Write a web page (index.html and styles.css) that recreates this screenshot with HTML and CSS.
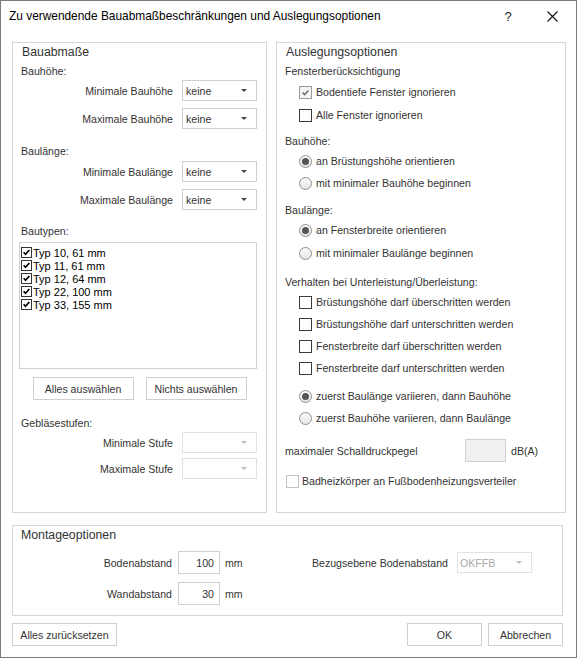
FILE: index.html
```html
<!DOCTYPE html>
<html lang="de">
<head>
    <meta charset="UTF-8">
    <meta name="viewport" content="width=device-width, initial-scale=1.0">
    <title>Bauabmaße und Auslegungsoptionen</title>
    <link rel="stylesheet" href="styles.css">
</head>
<body>
<div class="dialog">
    <div class="titlebar">
        <span class="title">Zu verwendende Bauabmaßbeschränkungen und Auslegungsoptionen</span>
        <span class="help">?</span>
        <span class="close">
            <svg width="11" height="11" viewBox="0 0 11 11"><path d="M0.5 0.5L10.5 10.5M10.5 0.5L0.5 10.5" stroke="#111" stroke-width="1.1"/></svg>
        </span>
    </div>

    <div class="content">
        <div class="columns">
            <!-- Bauabmaße -->
            <section class="group dims">
                <div class="gtitle">Bauabmaße</div>
                <div class="sub">Bauhöhe:</div>
                <div class="field">
                    <span>Minimale Bauhöhe</span>
                    <div class="select"><span>keine</span><i class="arrow"></i></div>
                </div>
                <div class="field next">
                    <span>Maximale Bauhöhe</span>
                    <div class="select"><span>keine</span><i class="arrow"></i></div>
                </div>

                <div class="sub sub-baulaenge">Baulänge:</div>
                <div class="field">
                    <span>Minimale Baulänge</span>
                    <div class="select"><span>keine</span><i class="arrow"></i></div>
                </div>
                <div class="field next">
                    <span>Maximale Baulänge</span>
                    <div class="select"><span>keine</span><i class="arrow"></i></div>
                </div>

                <div class="sub sub-bautypen">Bautypen:</div>
                <div class="typelist">
                    <div class="type"><span class="tick"><svg viewBox="0 0 11 11"><path d="M2 5.2L4.3 7.8L9 2.4"/></svg></span>Typ 10, 61 mm</div>
                    <div class="type"><span class="tick"><svg viewBox="0 0 11 11"><path d="M2 5.2L4.3 7.8L9 2.4"/></svg></span>Typ 11, 61 mm</div>
                    <div class="type"><span class="tick"><svg viewBox="0 0 11 11"><path d="M2 5.2L4.3 7.8L9 2.4"/></svg></span>Typ 12, 64 mm</div>
                    <div class="type"><span class="tick"><svg viewBox="0 0 11 11"><path d="M2 5.2L4.3 7.8L9 2.4"/></svg></span>Typ 22, 100 mm</div>
                    <div class="type"><span class="tick"><svg viewBox="0 0 11 11"><path d="M2 5.2L4.3 7.8L9 2.4"/></svg></span>Typ 33, 155 mm</div>
                </div>
                <div class="listbuttons">
                    <button class="btn">Alles auswählen</button>
                    <button class="btn">Nichts auswählen</button>
                </div>

                <div class="sub sub-fans">Gebläsestufen:</div>
                <div class="field">
                    <span>Minimale Stufe</span>
                    <div class="select disabled"><span></span><i class="arrow"></i></div>
                </div>
                <div class="field next-small">
                    <span>Maximale Stufe</span>
                    <div class="select disabled"><span></span><i class="arrow"></i></div>
                </div>
            </section>

            <!-- Auslegungsoptionen -->
            <section class="group opts">
                <div class="gtitle">Auslegungsoptionen</div>
                <div class="sub">Fensterberücksichtigung</div>
                <label class="option spaced">
                    <span class="box muted"><svg viewBox="0 0 13 13"><path d="M3 6.6L5.4 9L10 4.2"/></svg></span>
                    Bodentiefe Fenster ignorieren
                </label>
                <label class="option spaced"><span class="box"></span>Alle Fenster ignorieren</label>

                <div class="sub sub-gap">Bauhöhe:</div>
                <label class="option"><span class="radio on"></span>an Brüstungshöhe orientieren</label>
                <label class="option"><span class="radio"></span>mit minimaler Bauhöhe beginnen</label>

                <div class="sub sub-gap2">Baulänge:</div>
                <label class="option"><span class="radio on"></span>an Fensterbreite orientieren</label>
                <label class="option spaced"><span class="radio"></span>mit minimaler Baulänge beginnen</label>

                <div class="sub sub-gap3">Verhalten bei Unterleistung/Überleistung:</div>
                <label class="option"><span class="box"></span>Brüstungshöhe darf überschritten werden</label>
                <label class="option"><span class="box"></span>Brüstungshöhe darf unterschritten werden</label>
                <label class="option"><span class="box"></span>Fensterbreite darf überschritten werden</label>
                <label class="option"><span class="box"></span>Fensterbreite darf unterschritten werden</label>

                <label class="option opt-gap"><span class="radio on"></span>zuerst Baulänge variieren, dann Bauhöhe</label>
                <label class="option"><span class="radio"></span>zuerst Bauhöhe variieren, dann Baulänge</label>

                <div class="sound">
                    <span class="sound-label">maximaler Schalldruckpegel</span>
                    <span class="input readonly"></span>
                    <span class="unit">dB(A)</span>
                </div>

                <label class="option bath"><span class="box light"></span>Badheizkörper an Fußbodenheizungsverteiler</label>
            </section>
        </div>

        <!-- Montageoptionen -->
        <section class="group mount">
            <div class="gtitle">Montageoptionen</div>
            <div class="mount-body">
                <div class="mount-left">
                    <div class="mrow">
                        <span class="mlabel">Bodenabstand</span>
                        <span class="input">100</span>
                        <span class="unit">mm</span>
                    </div>
                    <div class="mrow second">
                        <span class="mlabel">Wandabstand</span>
                        <span class="input">30</span>
                        <span class="unit">mm</span>
                    </div>
                </div>
                <div class="mount-right">
                    <span>Bezugsebene Bodenabstand</span>
                    <div class="select disabled"><span>OKFFB</span><i class="arrow"></i></div>
                </div>
            </div>
        </section>

        <div class="footer">
            <button class="btn reset">Alles zurücksetzen</button>
            <button class="btn ok">OK</button>
            <button class="btn cancel">Abbrechen</button>
        </div>
    </div>
</div>
</body>
</html>
```

FILE: styles.css
```css
* {
    box-sizing: border-box;
}
body {
    margin: 0;
    font-family: "Liberation Sans", Arial, sans-serif;
    font-size: 10.6px;
    color: #333;
    background: #fff;
}
.dialog {
    width: 577px;
    height: 658px;
    border: 1px solid #7a7a7a;
    background: #fff;
    display: flex;
    flex-direction: column;
}

/* title bar */
.titlebar {
    height: 30px;
    display: flex;
    align-items: center;
    padding-left: 8px;
    color: #000;
    font-size: 11.9px;
}
.title {
    flex: 1;
}
.help {
    width: 40px;
    text-align: center;
    font-size: 13px;
    color: #222;
}
.close {
    width: 48px;
    height: 30px;
    display: flex;
    align-items: center;
    justify-content: center;
}

.content {
    padding: 11px 10px 0 11px;
}
.columns {
    display: flex;
    gap: 9px;
    height: 471px;
}
.group {
    border: 1px solid #d6d6d6;
}
.gtitle {
    height: 19px;
    line-height: 19px;
    font-size: 12.3px;
    padding-left: 9px;
}
.sub {
    height: 18px;
    line-height: 18px;
    padding-left: 8px;
    white-space: nowrap;
}

/* left group */
.dims {
    width: 255px;
}
.field {
    height: 21px;
    display: flex;
    align-items: center;
    justify-content: flex-end;
    padding-right: 9px;
}
.field > span {
    margin-right: 9px;
}
.field.next {
    margin-top: 7px;
}
.field.next-small {
    margin-top: 5px;
}
.sub-baulaenge {
    margin-top: 13px;
    height: 19px;
    line-height: 19px;
}
.sub-bautypen {
    margin-top: 12px;
}
.sub-fans {
    margin-top: 14px;
}

.select {
    width: 75px;
    height: 21px;
    border: 1px solid #cfcfcf;
    background: #fff;
    display: flex;
    align-items: center;
    padding: 0 9px 0 3px;
    flex: none;
}
.select .arrow {
    margin-left: auto;
    border-left: 3px solid transparent;
    border-right: 3px solid transparent;
    border-top: 3px solid #444;
}
.select.disabled {
    border-color: #e2e2e2;
    color: #a8a8a8;
}
.select.disabled .arrow {
    border-top-color: #bdbdbd;
}

.typelist {
    margin: 2px 9px 0 6px;
    height: 127px;
    border: 1px solid #d0d0d0;
    padding: 3px 0 0 1px;
}
.type {
    height: 13px;
    display: flex;
    align-items: center;
    font-size: 11px;
    color: #000;
}
.tick {
    width: 11px;
    height: 11px;
    border: 1px solid #333;
    margin-right: 1px;
    background: #fff;
}
.tick svg {
    display: block;
    width: 9px;
    height: 9px;
}
.tick path {
    fill: none;
    stroke: #000;
    stroke-width: 2;
}

.listbuttons {
    margin-top: 8px;
    display: flex;
    justify-content: center;
    gap: 12px;
}
.btn {
    height: 23px;
    width: 101px;
    border: 1px solid #cfcfcf;
    background: #fff;
    font: inherit;
    color: #333;
    padding: 0;
}

/* right group */
.opts {
    width: 290px;
}
.option {
    height: 22px;
    display: flex;
    align-items: center;
    padding-left: 22px;
    white-space: nowrap;
}
.option.spaced {
    margin-top: 1px;
}
.sub-gap {
    margin-top: 6px;
}
.sub-gap2 {
    margin-top: 8px;
    height: 17px;
    line-height: 17px;
}
.sub-gap3 {
    margin-top: 9px;
}
.opt-gap {
    margin-top: 6px;
}
.box {
    width: 13px;
    height: 13px;
    border: 1px solid #3c3c3c;
    background: #fff;
    margin-right: 4px;
    flex: none;
}
.box svg {
    display: block;
    width: 11px;
    height: 11px;
}
.box path {
    fill: none;
    stroke: #6e6e6e;
    stroke-width: 1.7;
}
.box.muted {
    border-color: #9a9a9a;
    background: #f4f4f4;
}
.box.light {
    border-color: #c4c4c4;
}
.radio {
    width: 13px;
    height: 13px;
    border: 1px solid #8f8f8f;
    border-radius: 50%;
    background: linear-gradient(#fbfbfb, #e6e6e6);
    margin-right: 4px;
    flex: none;
    display: flex;
    align-items: center;
    justify-content: center;
}
.radio.on::after {
    content: "";
    width: 7px;
    height: 7px;
    border-radius: 50%;
    background: #555;
}

.sound {
    margin-top: 10px;
    height: 23px;
    display: flex;
    align-items: center;
}
.sound-label {
    width: 188px;
    padding-left: 8px;
}
.input {
    width: 42px;
    height: 23px;
    border: 1px solid #d0d0d0;
    background: #fff;
    display: flex;
    align-items: center;
    justify-content: flex-end;
    padding-right: 5px;
}
.input.readonly {
    width: 41px;
    background: #f0f0f0;
}
.unit {
    margin-left: 5px;
}
.bath {
    margin-top: 8px;
    padding-left: 9px;
}
.bath .box {
    margin-right: 3px;
}

/* Montageoptionen */
.mount {
    margin-top: 12px;
    margin-right: 3px;
    height: 91px;
}
.mount .gtitle {
    padding-left: 8px;
}
.mount-body {
    display: flex;
    margin-top: 6px;
}
.mount-left {
    width: 299px;
    flex: none;
}
.mrow {
    height: 23px;
    display: flex;
    align-items: center;
}
.mrow.second {
    margin-top: 8px;
}
.mlabel {
    width: 159px;
    text-align: right;
    margin-right: 6px;
}
.mount-right {
    width: 220px;
    height: 23px;
    display: flex;
    align-items: center;
    justify-content: flex-end;
    white-space: nowrap;
}
.mount-right > span {
    margin-right: 9px;
}
.mount-right .select {
    padding-left: 2px;
}

/* bottom buttons */
.footer {
    margin-top: 7px;
    margin-right: 3px;
    display: flex;
    gap: 6px;
}
.footer .reset {
    width: 105px;
    margin-right: auto;
}
.footer .ok,
.footer .cancel {
    width: 75px;
}
```
